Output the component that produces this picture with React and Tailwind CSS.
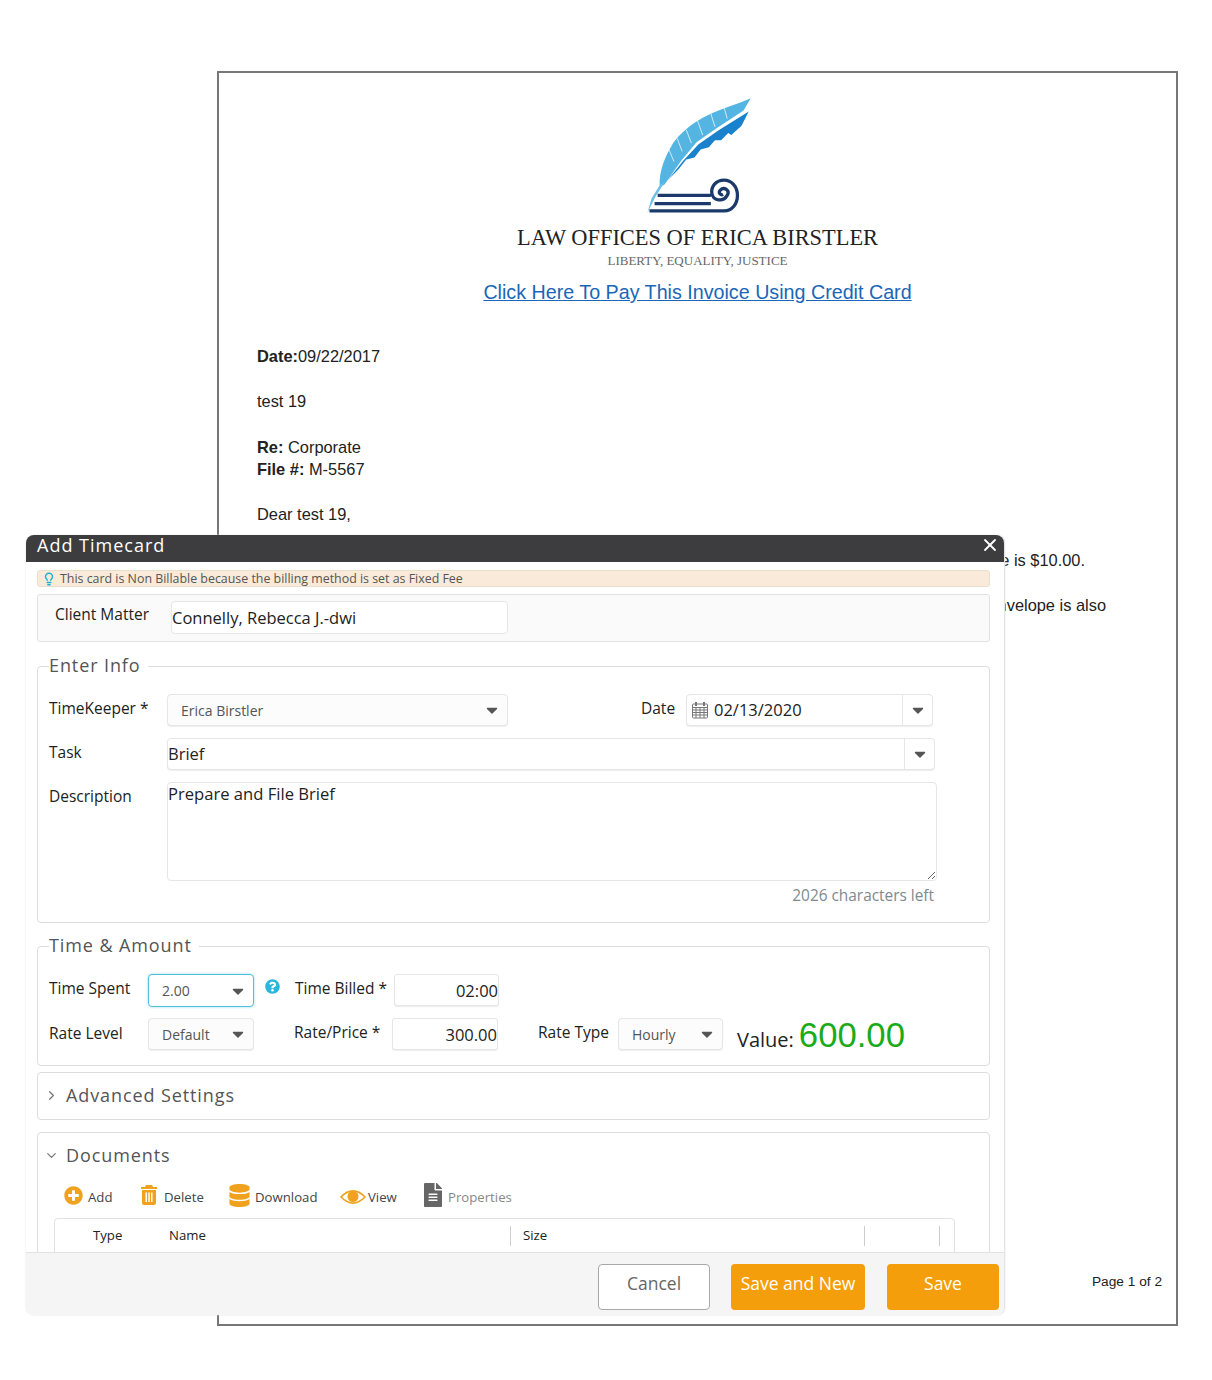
import React from 'react';
import { ChevronDown, ChevronRight, Lightbulb, X } from 'lucide-react';
import { FaCaretDown, FaDatabase, FaFileAlt, FaPlusCircle, FaQuestionCircle } from 'react-icons/fa';
import { twMerge } from 'tailwind-merge';

const Logo = () => (
  <svg viewBox="0 0 130 130" className="mr-[4px] h-[133px] w-[133px]">
    <path d="M30 97 C29 80 36 66 43 54 C50 44 60 36 72 29 C85 22 100 18 119 10 L112 22 L86 39 L66 53 L51 71 L35 94 Z" fill="#55b5e2" />
    <path d="M39 60 L44 72 M47 49 L52 62 M56 41 L61 54 M67 32 L72 46 M80 25 L84 38 M93 19 L96 30" stroke="#ffffff" strokeWidth="0.7" fill="none" />
    <path d="M117 23 L110 37 L100 46 L97 44 L90 51 L84 51 L78 58 L70 60 L64 68 L56 70 L48 80 L38 90 L53 71 L68 55 L88 41 Z" fill="#1a82cc" />
    <path d="M18 122 L22 108 L30 95 L35 92 L26 106 Z" fill="#6fc0e6" />
    <path d="M28 105 H80 M25 113 H80 M20 120 H93 C101 120 106 113 106 105 C106 96 100 90 93 90 C85 90 80 96 81 103 C82 110 92 112 96 105 C99 100 93 96 89 100 C87 103 90 105 92 104" fill="none" stroke="#1b3a6b" strokeWidth="3.2" />
  </svg>
);

const CalendarIcon = () => (
  <svg viewBox="0 0 18 18" className="h-[18px] w-[18px] shrink-0" fill="none" stroke="#777" strokeWidth="1">
    <rect x="1.5" y="3" width="15" height="14" rx="1" />
    <path d="M1.5 6.5 H16.5 M1.5 9 H16.5 M1.5 11.5 H16.5 M1.5 14 H16.5 M5 6.5 V17 M9 6.5 V17 M13 6.5 V17" />
    <path d="M5 1 V5 M13 1 V5" strokeWidth="2" />
  </svg>
);

const TrashIcon = () => (
  <svg viewBox="0 0 18 20" className="h-[20px] w-[18px]" fill="#f0a21e">
    <path d="M6 0 H12 L13 2 H17 V4 H1 V2 H5 Z" />
    <path fillRule="evenodd" d="M2 5 H16 V18 Q16 20 14 20 H4 Q2 20 2 18 Z M5.5 7.5 V17 H7 V7.5 Z M8.3 7.5 V17 H9.8 V7.5 Z M11 7.5 V17 H12.5 V7.5 Z" />
  </svg>
);

const EyeIcon = () => (
  <svg viewBox="0 0 26 16" className="h-[16px] w-[26px]">
    <path d="M1 8 Q13 -4 25 8 Q13 20 1 8 Z" fill="none" stroke="#f0a21e" strokeWidth="1.7" />
    <circle cx="13" cy="7.5" r="5.5" fill="#f0a21e" />
  </svg>
);

const Label = ({ className, children }) => (
  <div className={twMerge('shrink-0 text-[15.5px] leading-[28px] text-[#222]', className)}>{children}</div>
);

const Select = ({ value, className }) => (
  <div className={twMerge('flex h-[32px] shrink-0 items-center justify-between rounded-[4px] border border-[#e6e6e6] bg-[#fcfcfc] pl-[13px] pr-[6px] text-[14px] text-[#555] shadow-[0_1px_1px_#eeeeee]', className)}>
    <span>{value}</span>
    <FaCaretDown className="text-[18px] text-[#555]" />
  </div>
);

const NumberBox = ({ value, className }) => (
  <div className={`h-[32px] shrink-0 rounded-[3px] border border-[#e6e6e6] bg-white text-right text-[16.5px] leading-[32px] text-[#222] shadow-[0_1px_1px_#eeeeee] ${className}`}>
    {value}
  </div>
);

const ComboBox = ({ className, children }) => (
  <div className={`flex h-[32px] shrink-0 items-center rounded-[4px] border border-[#e6e6e6] bg-white text-[16.5px] text-[#222] shadow-[0_1px_1px_#eeeeee] ${className}`}>
    <div className="flex min-w-0 flex-1 items-center">{children}</div>
    <div className="flex h-full w-[30px] items-center justify-center border-l border-[#e6e6e6]">
      <FaCaretDown className="text-[18px] text-[#555]" />
    </div>
  </div>
);

const Group = ({ title, className, children }) => (
  <fieldset className={`rounded-[4px] border border-[#dddddd] pl-[11px] ${className}`}>
    <legend className="pb-[2px] pr-[7px] text-[18px] leading-[22px] tracking-[0.9px] text-[#555]">{title}</legend>
    {children}
  </fieldset>
);

const ToolItem = ({ icon, label, className }) => (
  <div className={`flex items-center text-[13.2px] ${className}`}>
    {icon}
    <span>{label}</span>
  </div>
);

const Document = () => (
  <div className="flex h-[1255px] w-[961px] flex-col border-2 border-[#777777] bg-white font-['Liberation_Sans',sans-serif] text-[16.4px] leading-[22.5px] text-[#222]">
    <div className="flex flex-col items-center pt-[15px]">
      <Logo />
      <div className="mt-[3px] font-['Liberation_Serif',serif] text-[22.4px] leading-[28px] text-[#222]">LAW OFFICES OF ERICA BIRSTLER</div>
      <div className="mt-[1px] font-['Liberation_Serif',serif] text-[13px] leading-[16px] text-[#666]">LIBERTY, EQUALITY, JUSTICE</div>
      <a href="#" className="mt-[10px] text-[19.7px] leading-[26px] text-[#1a66b8] underline">Click Here To Pay This Invoice Using Credit Card</a>
    </div>
    <div className="pl-[38px] pt-[40px]">
      <p className="h-[45px]"><b>Date:</b>09/22/2017</p>
      <p className="h-[46px]">test 19</p>
      <p className="h-[22px]"><b>Re:</b> Corporate</p>
      <p className="h-[45px]"><b>File #:</b> M-5567</p>
      <p className="h-[46px]">Dear test 19,</p>
      <p className="h-[45px] w-[828px] text-right">The balance due is $10.00.</p>
      <p className="w-[849px] text-right">A return envelope is also</p>
    </div>
    <div className="mt-auto flex justify-end pb-[32px] pr-[14px] text-[13.7px] leading-[20px]">Page 1 of 2</div>
  </div>
);

const Timecard = () => (
  <div className="absolute left-[26px] top-[535px] flex h-[780px] w-[979px] flex-col rounded-[8px] border-r border-[#e4e4e4] bg-white font-['Open_Sans',sans-serif] shadow-[0_0_2px_#e0e0e0]">
    <div className="flex h-[27px] shrink-0 items-center justify-between rounded-t-[8px] bg-[#3d3d3f] pb-[7px] pl-[11px] pr-[4px] text-[18px] tracking-[1px] text-white">
      <span>Add Timecard</span>
      <X size={20} strokeWidth={2.2} />
    </div>

    <div className="min-h-0 flex-1 overflow-hidden pl-[11px] pr-[14px]">
      <div className="mt-[8px] flex h-[17px] items-center rounded-[3px] border border-[#eadfcd] bg-[#f9ead9] pl-[4px] pt-[1px] text-[12.4px] text-[#555]">
        <Lightbulb size={14} strokeWidth={2.5} className="mr-[4px] text-[#22b0d8]" />
        This card is Non Billable because the billing method is set as Fixed Fee
      </div>

      <div className="mt-[7px] flex h-[48px] items-start rounded-[3px] border border-[#e2e2e2] bg-[#fafafa] pl-[17px] pt-[6px]">
        <Label className="w-[116px] leading-[26px]">Client Matter</Label>
        <div className="h-[33px] w-[337px] rounded-[4px] border border-[#e6e6e6] bg-white text-[16.5px] leading-[31px] text-[#222]">Connelly, Rebecca J.-dwi</div>
      </div>

      <Group title="Enter Info" className="mt-[12px] h-[269px]">
        <div className="flex pt-[16px]">
          <Label className="w-[118px]">TimeKeeper *</Label>
          <Select value="Erica Birstler" className="w-[341px]" />
          <Label className="ml-[133px] w-[45px]">Date</Label>
          <ComboBox className="w-[247px]">
            <span className="ml-[4px] mr-[5px]"><CalendarIcon /></span>
            02/13/2020
          </ComboBox>
        </div>
        <div className="mt-[12px] flex">
          <Label className="w-[118px]">Task</Label>
          <ComboBox className="w-[768px]">Brief</ComboBox>
        </div>
        <div className="mt-[12px] flex">
          <Label className="w-[118px]">Description</Label>
          <textarea readOnly value="Prepare and File Brief" className="h-[99px] w-[770px] rounded-[4px] border border-[#e6e6e6] text-[16.6px] leading-[22px] text-[#222]" />
        </div>
        <div className="mt-[3px] w-[885px] text-right text-[15.4px] leading-[24px] text-[#7d8a90]">2026 characters left</div>
      </Group>

      <Group title="Time &amp; Amount" className="mt-[11px] h-[132px]">
        <div className="flex pt-[16px]">
          <Label className="w-[99px]">Time Spent</Label>
          <Select value="2.00" className="h-[33px] w-[106px] border-[#4fc0e0] bg-white shadow-[0_0_3px_#9fdcef]" />
          <FaQuestionCircle className="ml-[11px] mt-[5px] shrink-0 text-[15px] text-[#2bb6de]" />
          <Label className="ml-[15px] w-[99px]">Time Billed *</Label>
          <NumberBox value="02:00" className="w-[105px]" />
        </div>
        <div className="mt-[11px] flex">
          <Label className="w-[99px] leading-[30px]">Rate Level</Label>
          <Select value="Default" className="w-[106px]" />
          <Label className="ml-[40px] w-[98px]">Rate/Price *</Label>
          <NumberBox value="300.00" className="w-[106px]" />
          <Label className="ml-[40px] w-[80px]">Rate Type</Label>
          <Select value="Hourly" className="w-[105px]" />
          <div className="ml-[14px] flex items-baseline">
            <span className="text-[20px] leading-[34px] text-[#222]">Value:</span>
            <span className="ml-[5px] font-['Liberation_Sans',sans-serif] text-[34.7px] leading-[34px] text-[#1aab1a]">600.00</span>
          </div>
        </div>
      </Group>

      <div className="mt-[6px] flex h-[48px] items-center rounded-[4px] border border-[#dddddd] pb-[2px] pl-[6px] text-[18px] tracking-[0.9px] text-[#555]">
        <ChevronRight size={15} className="mr-[7px] text-[#777]" />
        Advanced Settings
      </div>

      <div className="mt-[12px] h-[160px] rounded-t-[4px] border border-[#dddddd] pl-[6px]">
        <div className="flex h-[44px] items-center text-[18px] tracking-[0.9px] text-[#555]">
          <ChevronDown size={15} className="mr-[7px] text-[#777]" />
          Documents
        </div>
        <div className="flex h-[41px] items-center pl-[20px] text-[#444]">
          <ToolItem className="w-[76px]" label="Add" icon={<FaPlusCircle className="mb-[5px] mr-[5px] text-[19px] text-[#f0a21e]" />} />
          <ToolItem className="w-[88px]" label="Delete" icon={<span className="mb-[5px] mr-[6px]"><TrashIcon /></span>} />
          <ToolItem className="w-[112px]" label="Download" icon={<FaDatabase className="mb-[5px] mr-[4px] text-[23px] text-[#f0a21e]" />} />
          <ToolItem className="w-[81px]" label="View" icon={<span className="mr-[2px]"><EyeIcon /></span>} />
          <ToolItem className="text-[#888]" label="Properties" icon={<FaFileAlt className="mb-[6px] mr-[3px] text-[24px] text-[#666]" />} />
        </div>
        <div className="ml-[10px] flex h-[60px] w-[901px] rounded-t-[4px] border border-[#e2e2e2] pt-[7px] text-[13.2px] text-[#222]">
          <div className="w-[38px]" />
          <div className="h-[20px] w-[76px]">Type</div>
          <div className="h-[20px] w-[342px] border-r border-[#cccccc]">Name</div>
          <div className="h-[20px] w-[354px] border-r border-[#cccccc] pl-[12px]">Size</div>
          <div className="h-[20px] w-[75px] border-r border-[#cccccc]" />
        </div>
      </div>
    </div>

    <div className="flex h-[63px] shrink-0 items-start justify-end gap-[21px] rounded-b-[8px] border-t border-[#e2e2e2] bg-[#f5f5f5] pr-[5px] pt-[11px] text-[17.5px]">
      <button className="h-[46px] w-[112px] rounded-[4px] border border-[#a8a8a8] bg-white pb-[8px] text-[#666]">Cancel</button>
      <button className="h-[46px] w-[134px] rounded-[4px] bg-[#f59e0b] pb-[8px] text-white">Save and New</button>
      <button className="ml-[1px] h-[46px] w-[112px] rounded-[4px] bg-[#f59e0b] pb-[8px] text-white">Save</button>
    </div>
  </div>
);

export default function App() {
  return (
    <div className="relative h-[1380px] w-[1212px] overflow-hidden bg-white pl-[217px] pt-[71px]">
      <Document />
      <Timecard />
    </div>
  );
}
